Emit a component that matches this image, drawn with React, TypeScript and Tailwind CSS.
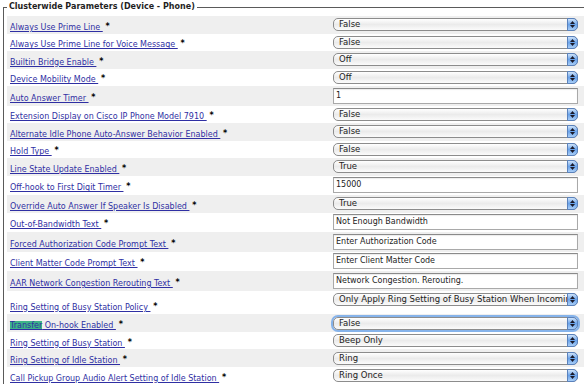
import React from "react";

type Row = {
  label: string;
  kind: "select" | "text";
  value: string;
  h: string;
  top?: boolean;
  focused?: boolean;
  highlight?: string;
};

const rows: Row[] = [
  { label: "Always Use Prime Line", kind: "select", value: "False", h: "h-[17.5px]" },
  { label: "Always Use Prime Line for Voice Message", kind: "select", value: "False", h: "h-[17.5px]" },
  { label: "Builtin Bridge Enable", kind: "select", value: "Off", h: "h-[17.5px]" },
  { label: "Device Mobility Mode", kind: "select", value: "Off", h: "h-[17.5px]" },
  { label: "Auto Answer Timer", kind: "text", value: "1", h: "h-[19.5px]" },
  { label: "Extension Display on Cisco IP Phone Model 7910", kind: "select", value: "False", h: "h-[17.5px]" },
  { label: "Alternate Idle Phone Auto-Answer Behavior Enabled", kind: "select", value: "False", h: "h-[17.5px]" },
  { label: "Hold Type", kind: "select", value: "False", h: "h-[17.5px]" },
  { label: "Line State Update Enabled", kind: "select", value: "True", h: "h-[17.5px]" },
  { label: "Off-hook to First Digit Timer", kind: "text", value: "15000", h: "h-[19.5px]" },
  { label: "Override Auto Answer If Speaker Is Disabled", kind: "select", value: "True", h: "h-[17.5px]" },
  { label: "Out-of-Bandwidth Text", kind: "text", value: "Not Enough Bandwidth", h: "h-[19.5px]" },
  { label: "Forced Authorization Code Prompt Text", kind: "text", value: "Enter Authorization Code", h: "h-[19.5px]" },
  { label: "Client Matter Code Prompt Text", kind: "text", value: "Enter Client Matter Code", h: "h-[19.5px]" },
  { label: "AAR Network Congestion Rerouting Text", kind: "text", value: "Network Congestion. Rerouting.", h: "h-[19.5px]" },
  {
    label: "Ring Setting of Busy Station Policy",
    kind: "select",
    value: "Only Apply Ring Setting of Busy Station When Incoming Call",
    h: "h-[23.75px]",
    top: true,
  },
  { label: "Transfer On-hook Enabled", kind: "select", value: "False", h: "h-[17.5px]", focused: true, highlight: "Transfer" },
  { label: "Ring Setting of Busy Station", kind: "select", value: "Beep Only", h: "h-[17.5px]" },
  { label: "Ring Setting of Idle Station", kind: "select", value: "Ring", h: "h-[17.5px]" },
  { label: "Call Pickup Group Audio Alert Setting of Idle Station", kind: "select", value: "Ring Once", h: "h-[17.5px]" },
];

function Stepper() {
  return (
    <div className="-my-px -mr-px flex h-[13px] w-[11px] shrink-0 flex-col items-center justify-center gap-[1px] rounded-r-[5px] border border-[#5a82bd] bg-linear-to-b from-[#cfe3f9] via-[#6aa3ea] to-[#a8cdf6]">
      <svg width="5" height="3" viewBox="0 0 5 3">
        <path d="M0 3 L2.5 0 L5 3 Z" fill="#1a1a2a" />
      </svg>
      <svg width="5" height="3" viewBox="0 0 5 3">
        <path d="M0 0 L2.5 3 L5 0 Z" fill="#1a1a2a" />
      </svg>
    </div>
  );
}

function Select({ value, focused }: { value: string; focused?: boolean }) {
  return (
    <div
      className={
        "flex h-[13px] w-[245px] items-center rounded-[5px] border border-[#8c8c8c] bg-linear-to-b from-white via-[#ebebeb] to-[#fbfbfb] " +
        (focused ? "shadow-[0_0_0_2px_#86b3ea]" : "")
      }
    >
      <span className="flex-1 overflow-hidden whitespace-nowrap pl-[5px] text-[8.5px] leading-[11px] text-[#1c1c1c]">
        {value}
      </span>
      <Stepper />
    </div>
  );
}

function TextInput({ value }: { value: string }) {
  return (
    <div className="flex h-[16px] w-[245px] items-center border border-[#a9a9a9] border-t-[#8a8a8a] bg-white pl-[2px] text-[8px] leading-none text-[#1c1c1c] shadow-[inset_0_1px_1px_rgba(0,0,0,0.08)]">
      {value}
    </div>
  );
}

function Label({ row }: { row: Row }) {
  let content: React.ReactNode = row.label + " ";
  if (row.highlight) {
    const rest = row.label.slice(row.highlight.length);
    content = (
      <>
        <span className="bg-[#3db487]">{row.highlight}</span>
        {rest + " "}
      </>
    );
  }
  return (
    <span className="whitespace-pre text-[8px] leading-[11px]">
      <a href="#" className="text-[#2f2fa3] underline underline-offset-[1px]">
        {content}
      </a>
      <span className="relative -top-[1px] font-bold text-black"> *</span>
    </span>
  );
}

export default function App() {
  return (
    <div className="h-[387px] w-[584px] overflow-hidden bg-white font-['DejaVu_Sans',sans-serif]">
      <fieldset className="ml-[3px] mt-[1px] border-l border-t border-[#5a5a5a] pl-[3px] pt-[3px]">
        <legend className="px-[2px] text-[8px] font-bold leading-[12px] text-[#1f1f1f]">
          Clusterwide Parameters (Device - Phone)
        </legend>
        <div className="flex flex-col">
          {rows.map((row, i) => (
            <div
              key={i}
              className={
                "flex " +
                row.h +
                " " +
                (row.top ? "items-start pt-[2.25px] " : "items-center ") +
                (i % 2 === 0 ? "bg-[#efefef]" : "bg-white")
              }
            >
              <div className="w-[326px] shrink-0 pl-[3px]">
                <Label row={row} />
              </div>
              <div className="flex-1">
                {row.kind === "select" ? (
                  <Select value={row.value} focused={row.focused} />
                ) : (
                  <TextInput value={row.value} />
                )}
              </div>
            </div>
          ))}
        </div>
      </fieldset>
    </div>
  );
}
